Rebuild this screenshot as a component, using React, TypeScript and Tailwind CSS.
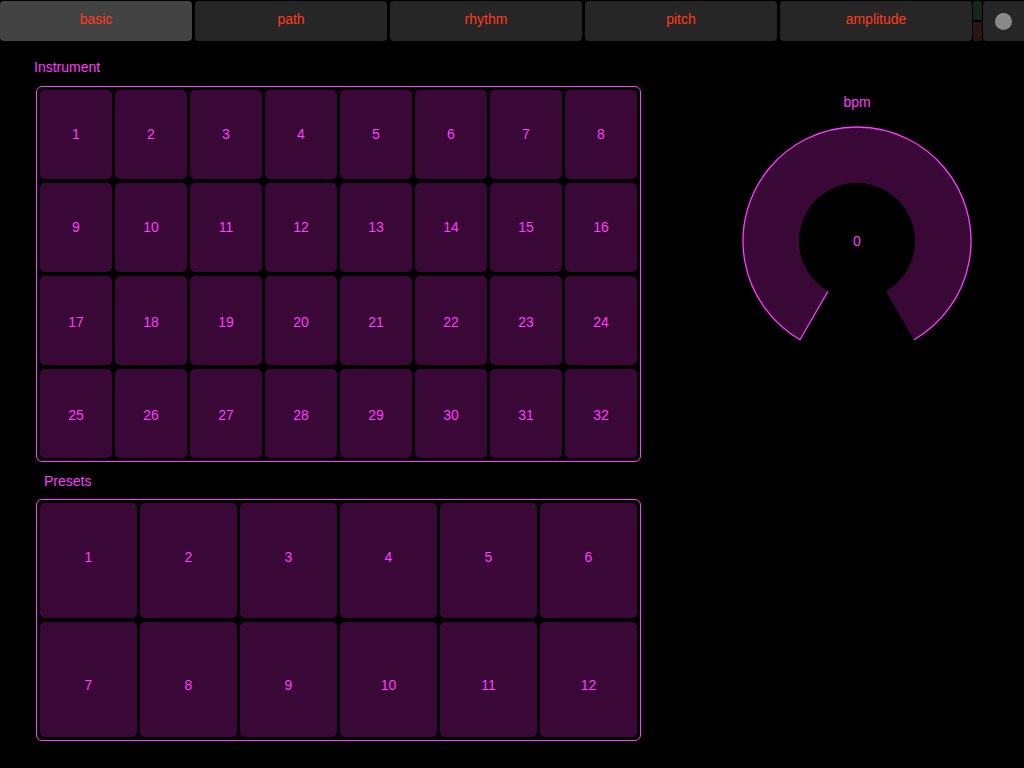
const tabs = ['basic', 'path', 'rhythm', 'pitch', 'amplitude']

const instrument = Array.from({ length: 32 }, (_, i) => i + 1)
const presets = Array.from({ length: 12 }, (_, i) => i + 1)

const Knob = ({ value }: { value: number }) => {
    // ring with a 60deg gap at the bottom
    const c = 116
    const ro = 114
    const ri = 58
    const s = Math.sin(Math.PI / 6)
    const k = Math.cos(Math.PI / 6)
    const lo = [c - ro * s, c + ro * k]
    const rO = [c + ro * s, c + ro * k]
    const li = [c - ri * s, c + ri * k]
    const rI = [c + ri * s, c + ri * k]
    const ring = `M ${lo[0]} ${lo[1]} A ${ro} ${ro} 0 1 1 ${rO[0]} ${rO[1]} L ${rI[0]} ${rI[1]} A ${ri} ${ri} 0 1 0 ${li[0]} ${li[1]} Z`
    const edge = `M ${li[0]} ${li[1]} L ${lo[0]} ${lo[1]} A ${ro} ${ro} 0 1 1 ${rO[0]} ${rO[1]}`
    return (
        <div className="relative w-[232px] h-[232px]">
            <svg width="232" height="232" viewBox="0 0 232 232">
                <path d={ring} fill="#3a0836" />
                <path d={edge} fill="none" stroke="#ff3cff" strokeWidth="1.3" />
            </svg>
            <div className="absolute inset-0 flex items-center justify-center text-[14px] text-[#ff3cff]">{value}</div>
        </div>
    )
}

const App = () => {
    return (
        <div className="w-[1024px] h-[768px] bg-black overflow-hidden" style={{ fontFamily: '"Liberation Sans", Arial, sans-serif' }}>
            {/* top bar */}
            <div className="flex flex-row pt-[1px] h-[41px]">
                <div className="flex flex-row gap-[3px]">
                    {tabs.map((t, i) => (
                        <button
                            key={t}
                            onClick={() => {}}
                            className={`w-[192px] h-[40px] rounded-[4px] flex items-center justify-center pb-[3px] text-[14px] text-[#ff3b1e] ${i === 0 ? 'bg-[#434343]' : 'bg-[#262626]'}`}
                        >
                            {t}
                        </button>
                    ))}
                </div>
                <div className="ml-[1px] w-[9px] h-[40px] flex flex-col gap-[2px]">
                    <div className="flex-1 bg-[#16261a] rounded-t-[2px]" />
                    <div className="flex-1 bg-[#2a1414] rounded-b-[2px]" />
                </div>
                <button onClick={() => {}} className="ml-[1px] flex-1 h-[40px] rounded-l-[4px] bg-[#262626] flex items-center justify-center">
                    <div className="w-[17px] h-[17px] rounded-full bg-[#8a8a8a]" />
                </button>
            </div>

            <div className="flex flex-row">
                {/* left column */}
                <div className="ml-[36px] w-[605px] flex flex-col">
                    <div className="mt-[18px] -ml-[2px] h-[16px] leading-[16px] text-[14px] text-[#ff3cff]">Instrument</div>
                    <div className="mt-[11px] border border-[#ff3cff] rounded-[6px] p-[3px] grid grid-cols-8 gap-x-[3px] gap-y-[4px]">
                        {instrument.map(n => (
                            <button
                                key={n}
                                onClick={() => {}}
                                className={`h-[89px] rounded-[5px] bg-[#3a0836] flex items-center justify-center text-[14px] text-[#ff3cff] ${n > 16 ? 'pt-[4px]' : ''}`}
                            >
                                {n}
                            </button>
                        ))}
                    </div>
                    <div className="mt-[11px] ml-[8px] h-[16px] leading-[16px] text-[14px] text-[#ff3cff]">Presets</div>
                    <div className="mt-[10px] border border-[#ff3cff] rounded-[6px] p-[3px] grid grid-cols-6 gap-x-[3px] gap-y-[4px]">
                        {presets.map(n => (
                            <button
                                key={n}
                                onClick={() => {}}
                                className={`h-[115px] rounded-[5px] bg-[#3a0836] flex items-center justify-center text-[14px] text-[#ff3cff] ${n > 6 ? 'pt-[12px]' : 'pb-[6px]'}`}
                            >
                                {n}
                            </button>
                        ))}
                    </div>
                </div>

                {/* right column */}
                <div className="ml-[100px] w-[232px] flex flex-col items-center">
                    <div className="mt-[53px] h-[16px] leading-[16px] text-[14px] text-[#ff3cff]">bpm</div>
                    <div className="mt-[15px]">
                        <Knob value={0} />
                    </div>
                </div>
            </div>
        </div>
    )
}
export default App
